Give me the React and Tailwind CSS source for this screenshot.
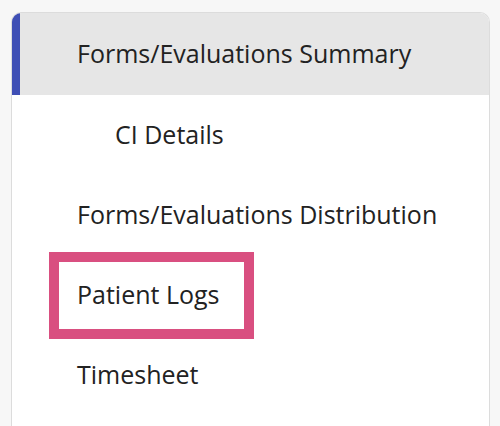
import React from 'react';

const items = [
    { label: 'CI Details', indent: true },
    { label: 'Forms/Evaluations Distribution' },
    { label: 'Patient Logs', highlight: true },
    { label: 'Timesheet' },
];

const App = () => {
    return (
        <div
            className="min-h-[426px] bg-[#f7f7f7] pt-[12px] pl-[11px] pr-[10px]"
            style={{ fontFamily: '"Open Sans", "Noto Sans", sans-serif' }}
        >
            <div className="h-[414px] overflow-hidden rounded-t-[10px] border border-b-0 border-[#dcdcdc] bg-white text-[#222]">
                {/* active section header */}
                <div className="flex h-[82px] items-center border-l-[8px] border-[#3f4fb5] bg-[#e6e6e6] pl-[57px] text-[25px]">
                    Forms/Evaluations Summary
                </div>

                {items.map((item) => (
                    <div
                        key={item.label}
                        className={`relative flex h-[80px] items-center text-[25px] ${item.indent ? 'pl-[103px]' : 'pl-[65px]'}`}
                    >
                        {item.highlight && (
                            <div className="absolute left-[37px] top-[-3px] h-[87px] w-[205px] border-[10px] border-[#d94f80]" />
                        )}
                        <span className="relative">{item.label}</span>
                    </div>
                ))}
            </div>
        </div>
    );
};

export default App;
